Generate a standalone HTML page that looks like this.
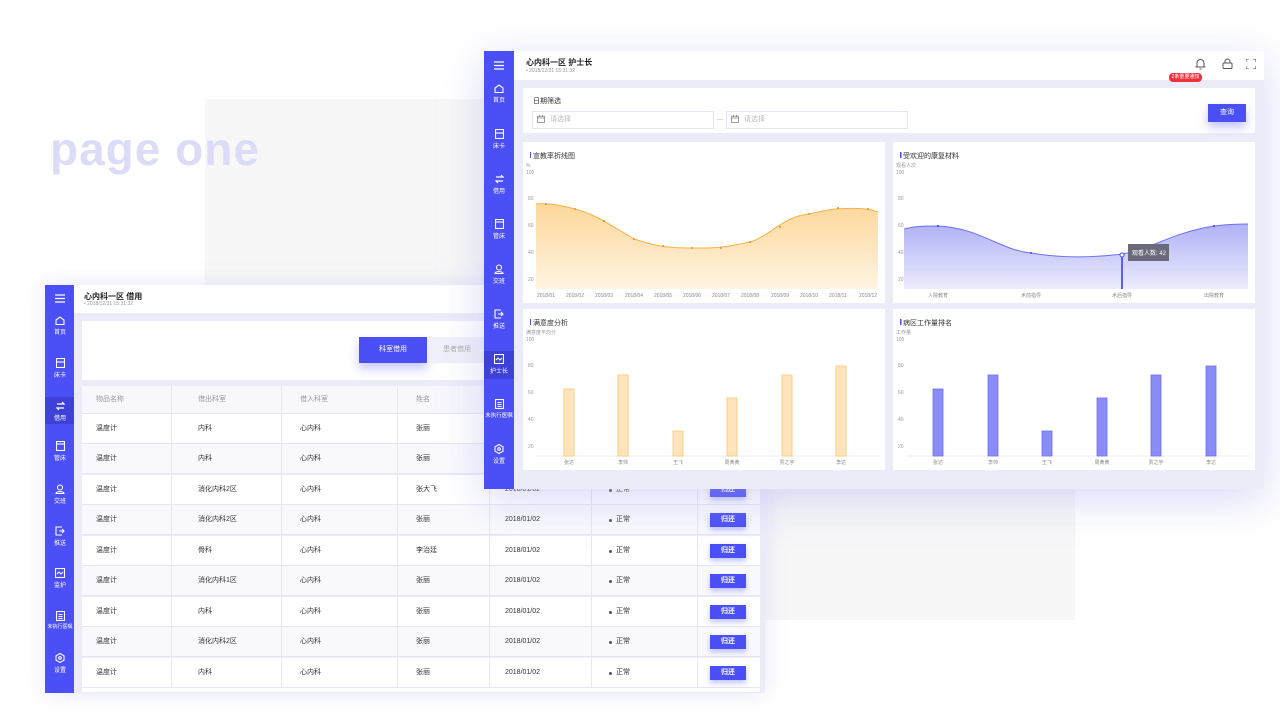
<!DOCTYPE html>
<html><head><meta charset="utf-8">
<style>
*{margin:0;padding:0;box-sizing:border-box}
body{width:1280px;height:720px;background:#fff;position:relative;overflow:hidden;font-family:"Liberation Sans","Noto Sans CJK SC",sans-serif;color:#333}
.a{position:absolute}
.sb{background:#4b4ff6;color:#fff}
.ni{position:absolute;width:30px;text-align:center;font-size:6px;color:#fff}
.ni svg{display:block;margin:0 auto 2px}
.row{position:absolute;left:82px;width:678px;height:30px;border-bottom:1px solid #e6e6f5;font-size:7px;color:#333;line-height:30px}
.row span{position:absolute;top:0}
.row i{position:absolute;top:0;bottom:0;width:1px;background:#e6e6f5}
.btn{position:absolute;left:628px;top:8px;width:36px;height:14px;background:#4b4ff6;color:#fff;font-size:7px;text-align:center;line-height:14px;box-shadow:0 3px 6px rgba(75,79,246,.35)}
.dot{position:absolute;left:527px;top:14px;width:3px;height:3px;border-radius:50%;background:#555}
.card{position:absolute;background:#fff}
</style></head><body>
<div class="a" style="left:205px;top:99px;width:870px;height:521px;background:#f7f7f7"></div>
<div class="a" style="left:50px;top:122px;font-size:46px;font-weight:bold;color:#dcdcf8;letter-spacing:1px">page one</div>

<!-- BACK WINDOW -->
<div class="a" style="left:45px;top:285px;width:720px;height:408px;background:#ececf9;box-shadow:0 0 20px rgba(180,180,240,.35)"></div>
<div class="a sb" style="left:45px;top:285px;width:29px;height:408px"></div>
<div class="a" style="left:45px;top:397px;width:29px;height:27px;background:#3d41d8"></div>
<div class="a" style="left:74px;top:285px;width:686px;height:28px;background:#fff"></div>
<div class="a" style="left:84px;top:291px;font-size:8px;font-weight:bold;color:#222">心内科一区 借用</div>
<div class="a" style="left:84px;top:301px;font-size:5px;color:#999">• 2018/12/31 15:31:32</div>
<div class="card" style="left:82px;top:321px;width:678px;height:59px"></div>
<div class="a" style="left:359px;top:337px;width:68px;height:26px;background:#4b4ff6;color:#fff;font-size:7px;text-align:center;line-height:26px;box-shadow:0 6px 10px rgba(75,79,246,.3)">科室借用</div>
<div class="a" style="left:427px;top:337px;width:60px;height:26px;background:#f0f0fa;color:#aaa;font-size:7px;text-align:center;line-height:26px">患者借用</div>

<div class="row" style="top:386px;height:28px;line-height:28px;background:#f7f7fc;color:#999"><span style="left:14px">物品名称</span><span style="left:116px">借出科室</span><span style="left:218px">借入科室</span><span style="left:334px">姓名</span><i style="left:89px"></i><i style="left:199px"></i><i style="left:315px"></i><i style="left:407px"></i><i style="left:509px"></i><i style="left:615px"></i></div>
<div class="row" style="top:414px;background:#fff"><span style="left:14px">温度计</span><span style="left:116px">内科</span><span style="left:218px">心内科</span><span style="left:334px">张丽</span><span style="left:423px">2018/01/02</span><b class="dot"></b><span style="left:534px">正常</span><b class="btn">归还</b><i style="left:89px"></i><i style="left:199px"></i><i style="left:315px"></i><i style="left:407px"></i><i style="left:509px"></i><i style="left:615px"></i></div>
<div class="row" style="top:444px;background:#f9f9fd"><span style="left:14px">温度计</span><span style="left:116px">内科</span><span style="left:218px">心内科</span><span style="left:334px">张丽</span><span style="left:423px">2018/01/02</span><b class="dot"></b><span style="left:534px">正常</span><b class="btn">归还</b><i style="left:89px"></i><i style="left:199px"></i><i style="left:315px"></i><i style="left:407px"></i><i style="left:509px"></i><i style="left:615px"></i></div>
<div class="row" style="top:475px;background:#fff"><span style="left:14px">温度计</span><span style="left:116px">消化内科2区</span><span style="left:218px">心内科</span><span style="left:334px">张大飞</span><span style="left:423px">2018/01/02</span><b class="dot"></b><span style="left:534px">正常</span><b class="btn">归还</b><i style="left:89px"></i><i style="left:199px"></i><i style="left:315px"></i><i style="left:407px"></i><i style="left:509px"></i><i style="left:615px"></i></div>
<div class="row" style="top:505px;background:#f9f9fd"><span style="left:14px">温度计</span><span style="left:116px">消化内科2区</span><span style="left:218px">心内科</span><span style="left:334px">张丽</span><span style="left:423px">2018/01/02</span><b class="dot"></b><span style="left:534px">正常</span><b class="btn">归还</b><i style="left:89px"></i><i style="left:199px"></i><i style="left:315px"></i><i style="left:407px"></i><i style="left:509px"></i><i style="left:615px"></i></div>
<div class="row" style="top:536px;background:#fff"><span style="left:14px">温度计</span><span style="left:116px">骨科</span><span style="left:218px">心内科</span><span style="left:334px">李治廷</span><span style="left:423px">2018/01/02</span><b class="dot"></b><span style="left:534px">正常</span><b class="btn">归还</b><i style="left:89px"></i><i style="left:199px"></i><i style="left:315px"></i><i style="left:407px"></i><i style="left:509px"></i><i style="left:615px"></i></div>
<div class="row" style="top:566px;background:#f9f9fd"><span style="left:14px">温度计</span><span style="left:116px">消化内科1区</span><span style="left:218px">心内科</span><span style="left:334px">张丽</span><span style="left:423px">2018/01/02</span><b class="dot"></b><span style="left:534px">正常</span><b class="btn">归还</b><i style="left:89px"></i><i style="left:199px"></i><i style="left:315px"></i><i style="left:407px"></i><i style="left:509px"></i><i style="left:615px"></i></div>
<div class="row" style="top:597px;background:#fff"><span style="left:14px">温度计</span><span style="left:116px">内科</span><span style="left:218px">心内科</span><span style="left:334px">张丽</span><span style="left:423px">2018/01/02</span><b class="dot"></b><span style="left:534px">正常</span><b class="btn">归还</b><i style="left:89px"></i><i style="left:199px"></i><i style="left:315px"></i><i style="left:407px"></i><i style="left:509px"></i><i style="left:615px"></i></div>
<div class="row" style="top:627px;background:#f9f9fd"><span style="left:14px">温度计</span><span style="left:116px">消化内科2区</span><span style="left:218px">心内科</span><span style="left:334px">张丽</span><span style="left:423px">2018/01/02</span><b class="dot"></b><span style="left:534px">正常</span><b class="btn">归还</b><i style="left:89px"></i><i style="left:199px"></i><i style="left:315px"></i><i style="left:407px"></i><i style="left:509px"></i><i style="left:615px"></i></div>
<div class="row" style="top:658px;background:#fff"><span style="left:14px">温度计</span><span style="left:116px">内科</span><span style="left:218px">心内科</span><span style="left:334px">张丽</span><span style="left:423px">2018/01/02</span><b class="dot"></b><span style="left:534px">正常</span><b class="btn">归还</b><i style="left:89px"></i><i style="left:199px"></i><i style="left:315px"></i><i style="left:407px"></i><i style="left:509px"></i><i style="left:615px"></i></div>
<div class="row" style="top:688px;height:4px;background:#fff;border:none"></div>

<!-- back sidebar items -->
<div class="ni" style="left:45px;top:294px"><svg width="10" height="9" viewBox="0 0 10 9" fill="none" stroke="#fff" stroke-width="1.2"><path d="M0 1h10M0 4.5h10M0 8h10"/></svg></div>
<div class="ni" style="left:45px;top:316px"><svg width="10" height="9" viewBox="0 0 10 9" fill="none" stroke="#fff" stroke-width="1.1"><path d="M1 4L5 1l4 3v4.5H1z"/></svg>首页</div>
<div class="ni" style="left:45px;top:358px"><svg width="9" height="10" viewBox="0 0 9 10" fill="none" stroke="#fff" stroke-width="1.1"><rect x=".5" y=".5" width="8" height="9"/><path d="M.5 4h8"/></svg>床卡</div>
<div class="ni" style="left:45px;top:401px"><svg width="9" height="10" viewBox="0 0 9 10" fill="none" stroke="#fff" stroke-width="1.2"><path d="M1 3h7L6 1M8 7H1l2 2"/></svg>借用</div>
<div class="ni" style="left:45px;top:441px"><svg width="9" height="10" viewBox="0 0 9 10" fill="none" stroke="#fff" stroke-width="1.1"><rect x=".5" y=".5" width="8" height="9"/><path d="M.5 3h8"/></svg>管床</div>
<div class="ni" style="left:45px;top:484px"><svg width="10" height="10" viewBox="0 0 10 10" fill="none" stroke="#fff" stroke-width="1.1"><circle cx="5" cy="3.5" r="2.5"/><path d="M1 9.5c0-2.5 8-2.5 8 0z"/></svg>交班</div>
<div class="ni" style="left:45px;top:526px"><svg width="10" height="10" viewBox="0 0 10 10" fill="none" stroke="#fff" stroke-width="1.1"><path d="M7 1H1v8h6M4 5h5M7 3l2 2-2 2"/></svg>推送</div>
<div class="ni" style="left:45px;top:568px"><svg width="10" height="10" viewBox="0 0 10 10" fill="none" stroke="#fff" stroke-width="1.1"><rect x=".5" y=".5" width="9" height="9"/><path d="M2 6l2-2 2 2 2-2"/></svg>监护</div>
<div class="ni" style="left:45px;top:611px;font-size:5px"><svg width="9" height="10" viewBox="0 0 9 10" fill="none" stroke="#fff" stroke-width="1.1"><rect x=".5" y=".5" width="8" height="9"/><path d="M2.5 3.5h4M2.5 5.5h4M2.5 7.5h4"/></svg>未执行医嘱</div>
<div class="ni" style="left:45px;top:653px"><svg width="10" height="10" viewBox="0 0 10 10" fill="none" stroke="#fff" stroke-width="1.1"><path d="M5 .5L9 2.8v4.4L5 9.5 1 7.2V2.8z"/><circle cx="5" cy="5" r="1.3"/></svg>设置</div>

<!-- FRONT WINDOW -->
<div class="a" style="left:484px;top:51px;width:780px;height:438px;background:#ececf9;box-shadow:0 10px 40px rgba(170,170,240,.45)"></div>
<div class="a sb" style="left:484px;top:51px;width:30px;height:438px"></div>
<div class="a" style="left:484px;top:351px;width:30px;height:28px;background:#3d41d8"></div>
<div class="a" style="left:514px;top:51px;width:750px;height:29px;background:#fff"></div>
<div class="a" style="left:526px;top:57px;font-size:8px;font-weight:bold;color:#222">心内科一区 护士长</div>
<div class="a" style="left:526px;top:68px;font-size:5px;color:#999">• 2018/12/31 15:31:32</div>
<svg class="a" style="left:1195px;top:58px" width="11" height="12" viewBox="0 0 11 12" fill="none" stroke="#555" stroke-width="1"><path d="M2 9V5a3.5 3.5 0 017 0v4h1.5H.5zM4.5 11h2"/></svg>
<svg class="a" style="left:1222px;top:58px" width="11" height="11" viewBox="0 0 11 11" fill="none" stroke="#555" stroke-width="1"><rect x="1" y="5" width="9" height="5.5" rx="1"/><path d="M3 5V3.5a2.5 2.5 0 015 0V5"/></svg>
<svg class="a" style="left:1246px;top:59px" width="10" height="10" viewBox="0 0 10 10" fill="none" stroke="#555" stroke-width="1"><path d="M0 3V0h3M7 0h3v3M10 7v3H7M3 10H0V7"/></svg>
<div class="a" style="left:1169px;top:73px;width:33px;height:9px;background:#f0323c;border-radius:4px;color:#fff;font-size:5px;text-align:center;line-height:9px">2条重要通知</div>

<div class="card" style="left:523px;top:88px;width:732px;height:45px"></div>
<div class="a" style="left:533px;top:96px;font-size:7px;color:#333">日期筛选</div>
<div class="a" style="left:532px;top:111px;width:182px;height:18px;border:1px solid #e6e6f0;font-size:7px;color:#bbb;line-height:16px;padding-left:17px">请选择</div>
<div class="a" style="left:726px;top:111px;width:182px;height:18px;border:1px solid #e6e6f0;font-size:7px;color:#bbb;line-height:16px;padding-left:17px">请选择</div>
<svg class="a" style="left:537px;top:115px" width="8" height="8" viewBox="0 0 8 8" fill="none" stroke="#888" stroke-width=".8"><rect x=".5" y="1.2" width="7" height="6.3"/><path d="M.5 3h7M2.5 0v2M5.5 0v2"/></svg>
<svg class="a" style="left:731px;top:115px" width="8" height="8" viewBox="0 0 8 8" fill="none" stroke="#888" stroke-width=".8"><rect x=".5" y="1.2" width="7" height="6.3"/><path d="M.5 3h7M2.5 0v2M5.5 0v2"/></svg>
<div class="a" style="left:717px;top:119px;width:6px;height:1px;background:#ddd"></div>
<div class="a" style="left:1208px;top:104px;width:38px;height:18px;background:#4b4ff6;color:#fff;font-size:7px;text-align:center;line-height:18px;box-shadow:0 5px 10px rgba(75,79,246,.35)">查询</div>

<div class="card" style="left:523px;top:142px;width:362px;height:161px"></div>
<div class="card" style="left:893px;top:142px;width:362px;height:161px"></div>
<div class="card" style="left:523px;top:309px;width:362px;height:161px"></div>
<div class="card" style="left:893px;top:309px;width:362px;height:161px"></div>

<svg class="a" style="left:0;top:0" width="1280" height="720" font-family="Liberation Sans, Noto Sans CJK SC, sans-serif">
<defs>
<linearGradient id="og" x1="0" y1="0" x2="0" y2="1"><stop offset="0" stop-color="#fdd79a"/><stop offset="1" stop-color="#fff4e2"/></linearGradient>
<linearGradient id="pg" x1="0" y1="0" x2="0" y2="1"><stop offset="0" stop-color="#b0b2f6"/><stop offset="1" stop-color="#ececfd"/></linearGradient>
</defs>
<g font-size="7" fill="#333">
<text x="533" y="158">宣教率折线图</text><text x="903" y="158">受欢迎的康复材料</text>
<text x="533" y="325">满意度分析</text><text x="903" y="325">病区工作量排名</text>
</g>
<g fill="#4b4ff6"><rect x="530" y="152" width="1" height="6"/><rect x="900" y="152" width="1.5" height="6"/><rect x="530" y="319" width="1" height="6"/><rect x="900" y="319" width="1.5" height="6"/></g>
<g font-size="5" fill="#999">
<text x="526" y="167">%</text><text x="896" y="167">观看人次</text><text x="526" y="334">满意度平均分</text><text x="896" y="334">工作量</text>
<text x="526" y="174">100</text><text x="528" y="200">80</text><text x="528" y="227">60</text><text x="528" y="254">40</text><text x="528" y="281">20</text>
<text x="896" y="174">100</text><text x="898" y="200">80</text><text x="898" y="227">60</text><text x="898" y="254">40</text><text x="898" y="281">20</text>
<text x="526" y="341">100</text><text x="528" y="367">80</text><text x="528" y="394">60</text><text x="528" y="421">40</text><text x="528" y="448">20</text>
<text x="896" y="341">100</text><text x="898" y="367">80</text><text x="898" y="394">60</text><text x="898" y="421">40</text><text x="898" y="448">20</text>
</g>
<path d="M536 204 C550 203 560 205 575 209 C595 214 610 225 634 239 C650 244 660 248 692 248 C710 248 718 249 750 242 C770 236 785 215 810 214 C825 210 838 207 868 209 L878 212 L878 289 L536 289Z" fill="url(#og)"/>
<path d="M536 204 C550 203 560 205 575 209 C595 214 610 225 634 239 C650 244 660 248 692 248 C710 248 718 249 750 242 C770 236 785 215 810 214 C825 210 838 207 868 209 L878 212" fill="none" stroke="#f9b048" stroke-width="1"/>
<g fill="#f08a2c"><circle cx="546" cy="204" r="1"/><circle cx="575" cy="209" r="1"/><circle cx="604" cy="221" r="1"/><circle cx="634" cy="239" r="1"/><circle cx="663" cy="246" r="1"/><circle cx="692" cy="248" r="1"/><circle cx="721" cy="248" r="1"/><circle cx="750" cy="242" r="1"/><circle cx="780" cy="227" r="1"/><circle cx="809" cy="214" r="1"/><circle cx="838" cy="208" r="1"/><circle cx="868" cy="209" r="1"/></g>
<g font-size="5" fill="#888" text-anchor="middle"><text x="546" y="297">2018/01</text><text x="575" y="297">2018/02</text><text x="604" y="297">2018/03</text><text x="634" y="297">2018/04</text><text x="663" y="297">2018/05</text><text x="692" y="297">2018/06</text><text x="721" y="297">2018/07</text><text x="750" y="297">2018/08</text><text x="780" y="297">2018/09</text><text x="809" y="297">2018/10</text><text x="838" y="297">2018/11</text><text x="868" y="297">2018/12</text></g>
<path d="M904 229 C915 226 925 226 938 226 C980 228 1000 250 1031 253 C1060 258 1090 258 1122 254 C1150 250 1170 233 1214 226 C1230 224 1240 224 1248 224 L1248 289 L904 289Z" fill="url(#pg)"/>
<path d="M904 229 C915 226 925 226 938 226 C980 228 1000 250 1031 253 C1060 258 1090 258 1122 254 C1150 250 1170 233 1214 226 C1230 224 1240 224 1248 224" fill="none" stroke="#6c6ff5" stroke-width="1"/>
<g fill="#3a3ef0"><circle cx="938" cy="226" r="1"/><circle cx="1031" cy="253" r="1"/><circle cx="1214" cy="226" r="1"/></g>
<rect x="1121" y="255" width="2" height="34" fill="#5a5ef5"/>
<circle cx="1122" cy="255" r="2" fill="#fff" stroke="#4b4ff6" stroke-width="1"/>
<rect x="1128" y="244" width="41" height="17" fill="#6a6a7a"/>
<text x="1132" y="255" font-size="6" fill="#fff">观看人数: 42</text>
<g font-size="5" fill="#888" text-anchor="middle"><text x="938" y="297">入院教育</text><text x="1031" y="297">术前指导</text><text x="1122" y="297">术后指导</text><text x="1214" y="297">出院教育</text></g>
<line x1="536" y1="456" x2="880" y2="456" stroke="#eee"/><line x1="906" y1="456" x2="1250" y2="456" stroke="#eee"/>
<g fill="#ffe5bd" stroke="#fdc46c" stroke-width=".8">
<rect x="564" y="389" width="10" height="67"/><rect x="618" y="375" width="10" height="81"/><rect x="673" y="431" width="10" height="25"/><rect x="727" y="398" width="10" height="58"/><rect x="782" y="375" width="10" height="81"/><rect x="836" y="366" width="10" height="90"/></g>
<g fill="#8a8cf8" stroke="#6c6ff5" stroke-width=".8">
<rect x="933" y="389" width="10" height="67"/><rect x="988" y="375" width="10" height="81"/><rect x="1042" y="431" width="10" height="25"/><rect x="1097" y="398" width="10" height="58"/><rect x="1151" y="375" width="10" height="81"/><rect x="1206" y="366" width="10" height="90"/></g>
<g font-size="5" fill="#888" text-anchor="middle"><text x="569" y="464">张达</text><text x="623" y="464">李帅</text><text x="678" y="464">王飞</text><text x="732" y="464">周黄黄</text><text x="787" y="464">贾之宇</text><text x="841" y="464">李达</text>
<text x="938" y="464">张达</text><text x="993" y="464">李帅</text><text x="1047" y="464">王飞</text><text x="1102" y="464">周黄黄</text><text x="1156" y="464">贾之宇</text><text x="1211" y="464">李达</text></g>
</svg>

<div class="ni" style="left:484px;top:61px"><svg width="10" height="9" viewBox="0 0 10 9" fill="none" stroke="#fff" stroke-width="1.2"><path d="M0 1h10M0 4.5h10M0 8h10"/></svg></div>
<div class="ni" style="left:484px;top:84px"><svg width="10" height="9" viewBox="0 0 10 9" fill="none" stroke="#fff" stroke-width="1.1"><path d="M1 4L5 1l4 3v4.5H1z"/></svg>首页</div>
<div class="ni" style="left:484px;top:129px"><svg width="9" height="10" viewBox="0 0 9 10" fill="none" stroke="#fff" stroke-width="1.1"><rect x=".5" y=".5" width="8" height="9"/><path d="M.5 4h8"/></svg>床卡</div>
<div class="ni" style="left:484px;top:174px"><svg width="9" height="10" viewBox="0 0 9 10" fill="none" stroke="#fff" stroke-width="1.2"><path d="M1 3h7L6 1M8 7H1l2 2"/></svg>借用</div>
<div class="ni" style="left:484px;top:219px"><svg width="9" height="10" viewBox="0 0 9 10" fill="none" stroke="#fff" stroke-width="1.1"><rect x=".5" y=".5" width="8" height="9"/><path d="M.5 3h8"/></svg>管床</div>
<div class="ni" style="left:484px;top:264px"><svg width="10" height="10" viewBox="0 0 10 10" fill="none" stroke="#fff" stroke-width="1.1"><circle cx="5" cy="3.5" r="2.5"/><path d="M1 9.5c0-2.5 8-2.5 8 0z"/></svg>交班</div>
<div class="ni" style="left:484px;top:309px"><svg width="10" height="10" viewBox="0 0 10 10" fill="none" stroke="#fff" stroke-width="1.1"><path d="M7 1H1v8h6M4 5h5M7 3l2 2-2 2"/></svg>推送</div>
<div class="ni" style="left:484px;top:354px"><svg width="10" height="10" viewBox="0 0 10 10" fill="none" stroke="#fff" stroke-width="1.1"><rect x=".5" y=".5" width="9" height="9"/><path d="M2 6l2-2 2 2 2-2"/></svg>护士长</div>
<div class="ni" style="left:484px;top:399px;font-size:5.5px"><svg width="9" height="10" viewBox="0 0 9 10" fill="none" stroke="#fff" stroke-width="1.1"><rect x=".5" y=".5" width="8" height="9"/><path d="M2.5 3.5h4M2.5 5.5h4M2.5 7.5h4"/></svg>未执行医嘱</div>
<div class="ni" style="left:484px;top:444px"><svg width="10" height="10" viewBox="0 0 10 10" fill="none" stroke="#fff" stroke-width="1.1"><path d="M5 .5L9 2.8v4.4L5 9.5 1 7.2V2.8z"/><circle cx="5" cy="5" r="1.3"/></svg>设置</div>
</body></html>
